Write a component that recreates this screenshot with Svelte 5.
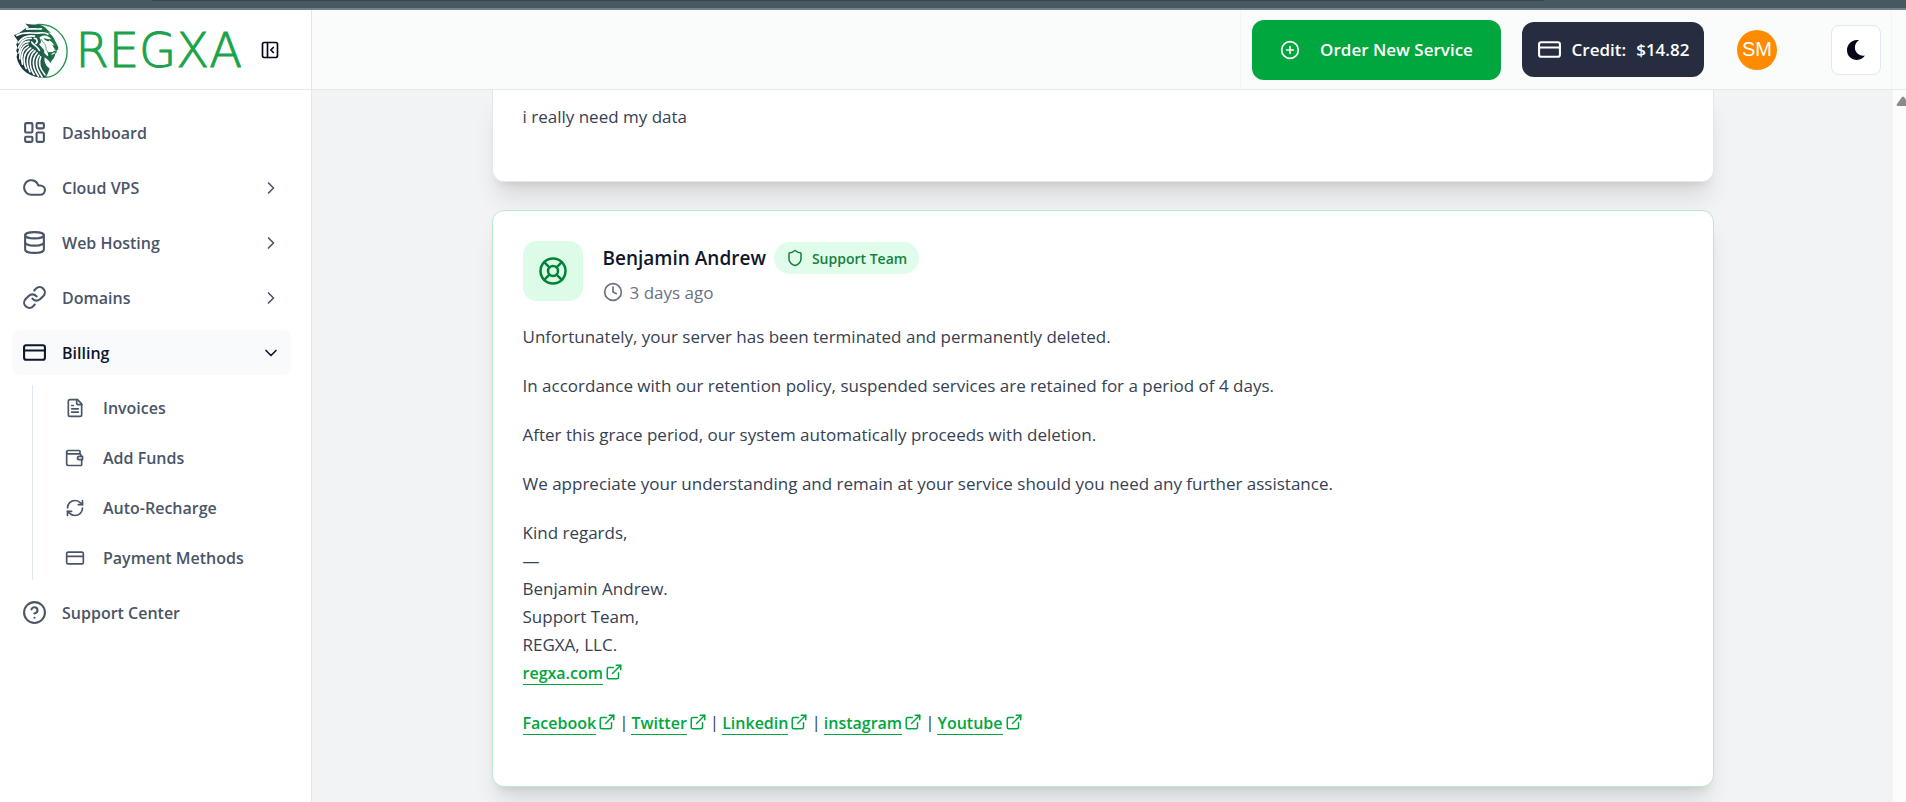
<script>
	const icons = {
		dashboard:
			'<rect width="7" height="9" x="3" y="3" rx="1"/><rect width="7" height="5" x="14" y="3" rx="1"/><rect width="7" height="9" x="14" y="12" rx="1"/><rect width="7" height="5" x="3" y="16" rx="1"/>',
		cloud: '<path d="M17.5 19H9a7 7 0 1 1 6.71-9h1.79a4.5 4.5 0 1 1 0 9Z"/>',
		database:
			'<ellipse cx="12" cy="5" rx="9" ry="3"/><path d="M3 5V19A9 3 0 0 0 21 19V5"/><path d="M3 12A9 3 0 0 0 21 12"/>',
		link: '<path d="M10 13a5 5 0 0 0 7.54.54l3-3a5 5 0 0 0-7.07-7.07l-1.72 1.71"/><path d="M14 11a5 5 0 0 0-7.54-.54l-3 3a5 5 0 0 0 7.07 7.07l1.71-1.71"/>',
		card: '<rect width="20" height="14" x="2" y="5" rx="2"/><line x1="2" x2="22" y1="10" y2="10"/>',
		file: '<path d="M15 2H6a2 2 0 0 0-2 2v16a2 2 0 0 0 2 2h12a2 2 0 0 0 2-2V7Z"/><path d="M14 2v4a2 2 0 0 0 2 2h4"/><path d="M10 9H8"/><path d="M16 13H8"/><path d="M16 17H8"/>',
		wallet:
			'<path d="M17 14h4v-4h-4a2 2 0 0 0 0 4Z"/><path d="M19 10V8a1 1 0 0 0-1-1H4a2 2 0 0 1 0-4h13a1 1 0 0 1 1 1v3"/><path d="M2 5v14a2 2 0 0 0 2 2h15a1 1 0 0 0 1-1v-6"/>',
		refresh:
			'<path d="M3 12a9 9 0 0 1 9-9 9.75 9.75 0 0 1 6.74 2.74L21 8"/><path d="M21 3v5h-5"/><path d="M21 12a9 9 0 0 1-9 9 9.75 9.75 0 0 1-6.74-2.74L3 16"/><path d="M8 16H3v5"/>',
		help: '<circle cx="12" cy="12" r="10"/><path d="M9.09 9a3 3 0 0 1 5.83 1c0 2-3 3-3 3"/><path d="M12 17h.01"/>',
		right: '<path d="m9 18 6-6-6-6"/>',
		down: '<path d="m6 9 6 6 6-6"/>',
		panel: '<rect width="18" height="18" x="3" y="3" rx="2"/><path d="M9 3v18"/><path d="m16 15-3-3 3-3"/>',
		plus: '<circle cx="12" cy="12" r="10"/><path d="M8 12h8"/><path d="M12 8v8"/>',
		buoy: '<circle cx="12" cy="12" r="10"/><path d="m4.93 4.93 4.24 4.24"/><path d="m14.83 9.17 4.24-4.24"/><path d="m14.83 14.83 4.24 4.24"/><path d="m9.17 14.83-4.24 4.24"/><circle cx="12" cy="12" r="4"/>',
		shield:
			'<path d="M20 13c0 5-3.5 7.5-7.66 8.95a1 1 0 0 1-.67-.01C7.5 20.5 4 18 4 13V6a1 1 0 0 1 1-1c2 0 4.5-1.2 6.24-2.72a1.17 1.17 0 0 1 1.52 0C14.51 3.81 17 5 19 5a1 1 0 0 1 1 1z"/>',
		clock: '<circle cx="12" cy="12" r="10"/><path d="M12 6v6l4 2"/>',
		external:
			'<path d="M15 3h6v6"/><path d="M10 14 21 3"/><path d="M18 13v6a2 2 0 0 1-2 2H5a2 2 0 0 1-2-2V8a2 2 0 0 1 2-2h6"/>',
	};

	const nav = [
		{ label: "Dashboard", icon: "dashboard" },
		{ label: "Cloud VPS", icon: "cloud", group: true },
		{ label: "Web Hosting", icon: "database", group: true },
		{ label: "Domains", icon: "link", group: true },
		{
			label: "Billing",
			icon: "card",
			group: true,
			items: [
				{ label: "Invoices", icon: "file" },
				{ label: "Add Funds", icon: "wallet" },
				{ label: "Auto-Recharge", icon: "refresh" },
				{ label: "Payment Methods", icon: "card" },
			],
		},
		{ label: "Support Center", icon: "help" },
	];

	const message = [
		"Unfortunately, your server has been terminated and permanently deleted.",
		"In accordance with our retention policy, suspended services are retained for a period of 4 days.",
		"After this grace period, our system automatically proceeds with deletion.",
		"We appreciate your understanding and remain at your service should you need any further assistance.",
	];

	const socials = ["Facebook", "Twitter", "Linkedin", "instagram", "Youtube"];

	let open = $state("Billing");

	function toggle(label) {
		open = open === label ? "" : label;
	}
</script>

{#snippet icon(name, size, stroke = 2)}
	<svg
		class="icon"
		width={size}
		height={size}
		viewBox="0 0 24 24"
		fill="none"
		stroke="currentColor"
		stroke-width={stroke}
		stroke-linecap="round"
		stroke-linejoin="round"
		aria-hidden="true"
	>
		{@html icons[name]}
	</svg>
{/snippet}

<div class="page">
	<div class="strip"><div class="tab-line"></div></div>

	<div class="shell">
		<aside class="sidebar">
			<div class="brand">
				<a class="logo" href="/" aria-label="REGXA home">
					<svg width="68" height="68" viewBox="0 0 204 204" aria-hidden="true">
						<defs>
							<linearGradient id="mane" x1="0" x2="1" y1="0.3" y2="0">
								<stop offset="0" stop-color="#1a3342" />
								<stop offset="0.5" stop-color="#1f6049" />
								<stop offset="1" stop-color="#1c8c46" />
							</linearGradient>
						</defs>
						<path
							d="M92 25C146 20 185 60 185 106C185 151 153 184 119 185"
							fill="none"
							stroke="#1c9148"
							stroke-width="4"
						/>
						<path
							fill="url(#mane)"
							d="M58 22C75 28 96 21 113 30C123 35 127 45 136 50L128 49C137 55 143 61 146 69L158 92L158 100L153 105L154 109L149 113C149 121 143 129 137 136L136 142C130 135 123 128 117 124C114 139 122 151 132 158C127 171 125 178 119 186C75 187 40 164 32 123L35 112L31 105L34 94L31 85L36 75L24 57L42 49L58 37L70 34Z"
						/>
						<path
							fill="#fff"
							d="M105 61C117 54 130 60 137 69L127 70L139 78C143 84 147 91 153 96L144 99L153 103L141 106L149 110C143 118 134 114 125 120L116 112C118 98 106 94 100 84C107 83 108 72 101 65Z"
						/>
						<g fill="none" stroke="#fff" stroke-width="5" stroke-linecap="round">
							<path d="M32 58C54 46 74 51 91 51C107 51 116 46 127 54" />
							<path d="M62 39C80 36 92 40 107 38" />
							<path d="M37 80C51 60 69 57 86 60" />
							<path d="M37 96C46 73 61 65 76 67" />
							<path d="M39 111C42 89 54 76 70 76" />
							<path d="M42 129C40 107 51 87 66 84" />
							<path d="M50 145C44 120 51 100 68 91" />
							<path d="M61 158C49 132 55 109 75 96" />
							<path d="M73 168C59 143 62 115 82 101" />
							<path d="M85 176C68 151 70 121 88 105" />
							<path d="M98 181C78 154 79 128 94 111" />
							<path d="M109 183C91 158 87 136 100 118" />
							<path d="M118 177C101 158 97 141 105 123" />
							<path d="M78 78C84 90 95 88 101 103" />
							<path d="M86 67C95 66 97 79 90 82" />
						</g>
						<path fill="#1b6a45" d="M114 66L133 71L128 76L118 72ZM140 86L158 93L152 101L145 96ZM126 109L148 108L137 114L137 128L128 119Z" />
						<path d="M106 69C112 82 122 84 121 96C121 104 127 106 128 112" fill="none" stroke="#1b6a45" stroke-width="2" />
					</svg>
					<span class="wordmark">REGXA</span>
				</a>
				<button class="collapse" aria-label="Collapse sidebar">{@render icon("panel", 20, 2)}</button>
			</div>

			<nav class="nav">
				{#each nav as item (item.label)}
					{#if item.group}
						<button
							class="nav-item"
							class:active={open === item.label}
							aria-expanded={open === item.label}
							onclick={() => toggle(item.label)}
						>
							{@render icon(item.icon, 25)}
							<span>{item.label}</span>
							{@render icon(open === item.label ? "down" : "right", 20)}
						</button>
						{#if item.items && open === item.label}
							<div class="submenu">
								{#each item.items as sub (sub.label)}
									<a class="sub-item" href="/">
										{@render icon(sub.icon, 20)}
										<span>{sub.label}</span>
									</a>
								{/each}
							</div>
						{/if}
					{:else}
						<a class="nav-item" href="/">
							{@render icon(item.icon, 25)}
							<span>{item.label}</span>
						</a>
					{/if}
				{/each}
			</nav>
		</aside>

		<div class="content">
			<header class="topbar">
				<div class="actions">
					<button class="order">
						{@render icon("plus", 20)}
						<span>Order New Service</span>
					</button>
					<a class="credit" href="/">
						{@render icon("card", 25)}
						<span>Credit:</span>
						<span>$14.82</span>
					</a>
					<button class="avatar" aria-label="Account">SM</button>
					<button class="theme" aria-label="Toggle dark mode">
						<svg width="20" height="20" viewBox="0 0 20 20" aria-hidden="true">
							<path
								fill="#020617"
								d="M13.2 0C6-.6 1 4.2 1 10.2C1 16 5.6 20 11 20C14.5 20 17.3 18.4 19 15.6C13.5 16.7 8.9 12.6 8.9 7.5C8.9 4.4 10.4 1.7 13.2 0Z"
							/>
						</svg>
					</button>
				</div>
				<div class="edge"></div>
			</header>

			<div class="body">
				<main class="thread">
					<article class="card first">
						<p>i really need my data</p>
					</article>

					<article class="card staff">
						<div class="author">
							<div class="badge-icon">{@render icon("buoy", 30)}</div>
							<div class="who">
								<div class="name-row">
									<h2>Benjamin Andrew</h2>
									<span class="role">{@render icon("shield", 18)}Support Team</span>
								</div>
								<div class="time">{@render icon("clock", 20)}<span>3 days ago</span></div>
							</div>
						</div>

						{#each message as line}
							<p>{line}</p>
						{/each}
						<p>
							Kind regards,<br />
							—<br />
							Benjamin Andrew.<br />
							Support Team,<br />
							REGXA, LLC.<br />
							<a class="ext" href="/"><span>regxa.com</span>{@render icon("external", 18)}</a>
						</p>
						<p class="socials">
							{#each socials as name, i}
								{#if i > 0}<span>|</span>{/if}
								<a class="ext" href="/"><span>{name}</span>{@render icon("external", 18)}</a>
							{/each}
						</p>
					</article>
				</main>
				<div class="scroll">
					<svg width="14" height="10" viewBox="0 0 14 10" aria-hidden="true">
						<path d="M6 1Q7 0 8 1L13 8Q14 10 12 10H2Q0 10 1 8Z" fill="#8b8b8b" />
					</svg>
				</div>
			</div>
		</div>
	</div>
</div>

<style>
	:global(body) {
		margin: 0;
		font-family: "Segoe UI", "Open Sans", "Noto Sans", sans-serif;
		font-size: 17px;
		color: #364153;
		background: #f2f3f5;
	}

	.page {
		display: flex;
		flex-direction: column;
		height: 100vh;
		overflow: hidden;
	}

	.page :global(*) {
		box-sizing: border-box;
	}

	.icon {
		display: block;
		flex: none;
	}

	button {
		font: inherit;
		color: inherit;
		border: 0;
		padding: 0;
		background: none;
		cursor: pointer;
	}

	a {
		color: inherit;
		text-decoration: none;
	}

	.strip {
		flex: none;
		height: 10px;
		background: #465862;
		border-bottom: 2px solid #738088;
	}

	.tab-line {
		height: 1px;
		margin: 0 19% 0 8%;
		background: #38444a;
	}

	.shell {
		flex: 1;
		display: flex;
		min-height: 0;
	}

	/* sidebar */
	.sidebar {
		flex: none;
		width: 312px;
		background: #fff;
		border-right: 1px solid #e2e8f0;
	}

	.brand {
		display: flex;
		align-items: center;
		gap: 18px;
		height: 80px;
		padding-left: 6px;
		border-bottom: 1px solid #e2e8f0;
	}

	.logo {
		display: flex;
		align-items: center;
		gap: 2px;
		width: 236px;
	}

	.wordmark {
		font-family: "DejaVu Sans", sans-serif;
		font-size: 48px;
		font-weight: 200;
		line-height: 60px;
		color: #1aa34a;
		-webkit-text-stroke: 1px #1aa34a;
	}

	.collapse {
		color: #020617;
	}

	.nav {
		display: flex;
		flex-direction: column;
		gap: 10px;
		padding: 20px 20px 20px 12px;
	}

	.nav-item {
		display: flex;
		align-items: center;
		gap: 15px;
		height: 45px;
		padding: 0 10px;
		border-radius: 8px;
		font-size: 16px;
		font-weight: 600;
		color: #4a5568;
		text-align: left;
	}

	.nav-item span {
		flex: 1;
	}

	.nav-item.active {
		background: #f8fafc;
		color: #0f172b;
	}

	.submenu {
		display: flex;
		flex-direction: column;
		gap: 5px;
		margin-left: 20px;
		padding-left: 20px;
		border-left: 1px solid #e2e8f0;
	}

	.sub-item {
		display: flex;
		align-items: center;
		gap: 18px;
		height: 45px;
		padding: 0 12px;
		font-size: 16px;
		font-weight: 600;
		color: #4a5568;
	}

	/* top bar */
	.content {
		flex: 1;
		display: flex;
		flex-direction: column;
		min-width: 0;
	}

	.topbar {
		flex: none;
		display: flex;
		justify-content: flex-end;
		height: 80px;
		background: #fafcfb;
		border-bottom: 1px solid #e2e8f0;
	}

	.actions {
		display: flex;
		align-items: center;
		padding: 0 10px 0 11px;
		border-left: 1px solid #f2f4f5;
		border-right: 1px solid #f2f4f5;
	}

	.edge {
		width: 14px;
	}

	.order {
		display: flex;
		align-items: center;
		justify-content: center;
		gap: 20px;
		width: 249px;
		height: 60px;
		border-radius: 12px;
		background: #00a63e;
		color: #fff;
		font-weight: 600;
	}

	.credit {
		display: flex;
		align-items: center;
		justify-content: center;
		gap: 10px;
		width: 182px;
		height: 55px;
		margin-left: 21px;
		border-radius: 12px;
		background: #272d40;
		color: #fff;
		font-weight: 600;
	}

	.avatar {
		width: 40px;
		height: 40px;
		margin: 0 54px 0 33px;
		border-radius: 50%;
		background: #ff8c00;
		color: #fff;
		font-family: "Liberation Sans", Arial, sans-serif;
		font-size: 20px;
	}

	.theme {
		display: grid;
		place-items: center;
		width: 50px;
		height: 50px;
		border: 1px solid #e2e8f0;
		border-radius: 8px;
		background: #fff;
	}

	/* thread */
	.body {
		flex: 1;
		display: flex;
		min-height: 0;
		overflow: hidden;
	}

	.thread {
		flex: 1;
		display: flex;
		flex-direction: column;
		align-items: center;
		gap: 28px;
	}

	.card {
		flex: none;
		width: 1222px;
		max-width: calc(100% - 48px);
		padding: 30px;
		border: 1px solid #e5e7eb;
		border-radius: 12px;
		background: #fff;
		box-shadow:
			0 20px 25px -5px rgba(0, 0, 0, 0.1),
			0 8px 10px -6px rgba(0, 0, 0, 0.1);
	}

	.card.first {
		padding: 13px 30px 50px;
		border-top: 0;
		border-radius: 0 0 12px 12px;
	}

	.card.staff {
		padding-bottom: 50px;
		border-color: #b9e8cd;
	}

	.card p {
		margin: 0 0 21px;
		line-height: 28px;
	}

	.card p:last-child {
		margin-bottom: 0;
	}

	.author {
		display: flex;
		gap: 20px;
		margin-bottom: 14px;
	}

	.badge-icon {
		display: grid;
		place-items: center;
		width: 60px;
		height: 60px;
		border-radius: 14px;
		background: #dcfce7;
		color: #008236;
	}

	.name-row {
		display: flex;
		align-items: center;
		gap: 8px;
		height: 34px;
	}

	h2 {
		margin: 0;
		font-size: 19px;
		font-weight: 600;
		color: #0f172b;
	}

	.role {
		display: flex;
		align-items: center;
		gap: 8px;
		height: 32px;
		padding: 0 12px;
		border-radius: 16px;
		background: #e0fcea;
		color: #15803d;
		font-size: 14px;
		font-weight: 600;
	}

	.time {
		display: flex;
		align-items: center;
		gap: 7px;
		height: 34px;
		color: #6a7282;
	}

	.ext {
		display: inline-flex;
		align-items: center;
		gap: 2px;
		color: #00a63e;
		font-size: 16px;
		font-weight: 600;
	}

	.ext span {
		height: 26px;
		line-height: 28px;
		border-bottom: 1px solid #00a63e;
	}

	.card .socials {
		display: flex;
		flex-wrap: wrap;
		gap: 3px;
	}

	.scroll {
		flex: none;
		width: 13px;
		padding: 6px 0 0 3px;
		background: #fcfcfc;
		overflow: hidden;
	}

	.scroll svg {
		display: block;
	}
</style>
